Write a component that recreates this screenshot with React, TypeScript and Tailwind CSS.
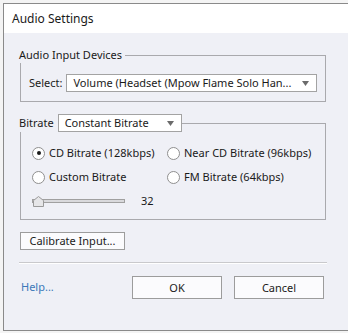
import React from "react";

function Combo({ text, className }: { text: string; className: string }) {
  return (
    <div className={`flex h-[18px] items-center border border-[#a3a3a3] bg-white pl-[6px] pr-[7px] ${className}`}>
      <span className="flex-1 whitespace-nowrap leading-[16px]">{text}</span>
      <svg width="7" height="5" viewBox="0 0 7 5" className="ml-1 shrink-0">
        <path d="M0 0h7L3.5 5z" fill="#6b6b6b" />
      </svg>
    </div>
  );
}

function Radio({ label, checked }: { label: string; checked?: boolean }) {
  return (
    <label className="flex h-6 items-center gap-[4px]">
      <span className="flex h-[13px] w-[13px] items-center justify-center rounded-full border border-[#8f8f8f] bg-white">
        {checked && <span className="h-[4px] w-[4px] rounded-full bg-[#1a1a1a]" />}
      </span>
      <span>{label}</span>
    </label>
  );
}

function Btn({ children, className }: { children: React.ReactNode; className: string }) {
  return (
    <button className={`flex items-center justify-center border border-[#9c9c9c] bg-[#fbfbfd] leading-[16px] text-[#1a1a1a] ${className}`}>
      {children}
    </button>
  );
}

export default function App() {
  return (
    <div className="h-[333px] w-[348px] overflow-hidden bg-[#f4f4f4] pl-[3px] pt-[3px] font-['Segoe_UI','Noto_Sans',sans-serif] text-[11px] text-[#1a1a1a]">
      <div className="flex h-[328px] w-[360px] flex-col border-b border-l border-t border-[#8a8a8a] bg-[#eff0f6]">
        <div className="flex h-[29px] items-center bg-white pl-[8px] text-[12px]">Audio Settings</div>

        <div className="flex flex-col pl-[16px]">
          <fieldset className="mt-[14px] w-[306px] border border-[#a9a9ad] pb-[9px] pl-[8px] pt-[11px]">
            <legend className="-ml-[10px] pr-[3px] leading-4">Audio Input Devices</legend>
            <div className="flex items-center gap-[4px]">
              <span>Select:</span>
              <Combo text="Volume (Headset (Mpow Flame Solo Han..." className="w-[251px]" />
            </div>
          </fieldset>

          <fieldset className="mt-[12px] w-[306px] border border-[#a9a9ad] pb-[6px] pl-[11px] pt-[9px]">
            <legend className="-ml-[13px] flex items-center gap-[4px]">
              <span>Bitrate</span>
              <Combo text="Constant Bitrate" className="w-[124px]" />
            </legend>
            <div className="grid grid-cols-[135px_1fr]">
              <Radio label="CD Bitrate (128kbps)" checked />
              <Radio label="Near CD Bitrate (96kbps)" />
              <Radio label="Custom Bitrate" />
              <Radio label="FM Bitrate (64kbps)" />
            </div>
            <div className="flex h-6 items-center">
              <div className="relative h-[4px] w-[93px] border border-[#a0a0a0] bg-[#d9d9dc]">
                <svg width="11" height="11" viewBox="0 0 11 11" className="absolute -top-[4px] left-0">
                  <path d="M0.5 4.5L5.5 0.5L10.5 4.5V10.5H0.5Z" fill="#e6e6e8" stroke="#9a9a9a" />
                </svg>
              </div>
              <span className="ml-[16px]">32</span>
            </div>
          </fieldset>

          <Btn className="mt-[12px] h-[18px] w-[105px]">Calibrate Input...</Btn>

          <div className="mt-[12px] h-[2px] w-[308px] -ml-[1px] border-t border-[#c9c9cc] bg-white" />

          <div className="mt-[12px] flex items-center">
            <a className="w-[112px] pl-[1px] text-[#3c78b9]">Help...</a>
            <Btn className="h-[23px] w-[90px]">OK</Btn>
            <Btn className="ml-[12px] h-[23px] w-[90px]">Cancel</Btn>
          </div>
        </div>
      </div>
    </div>
  );
}
